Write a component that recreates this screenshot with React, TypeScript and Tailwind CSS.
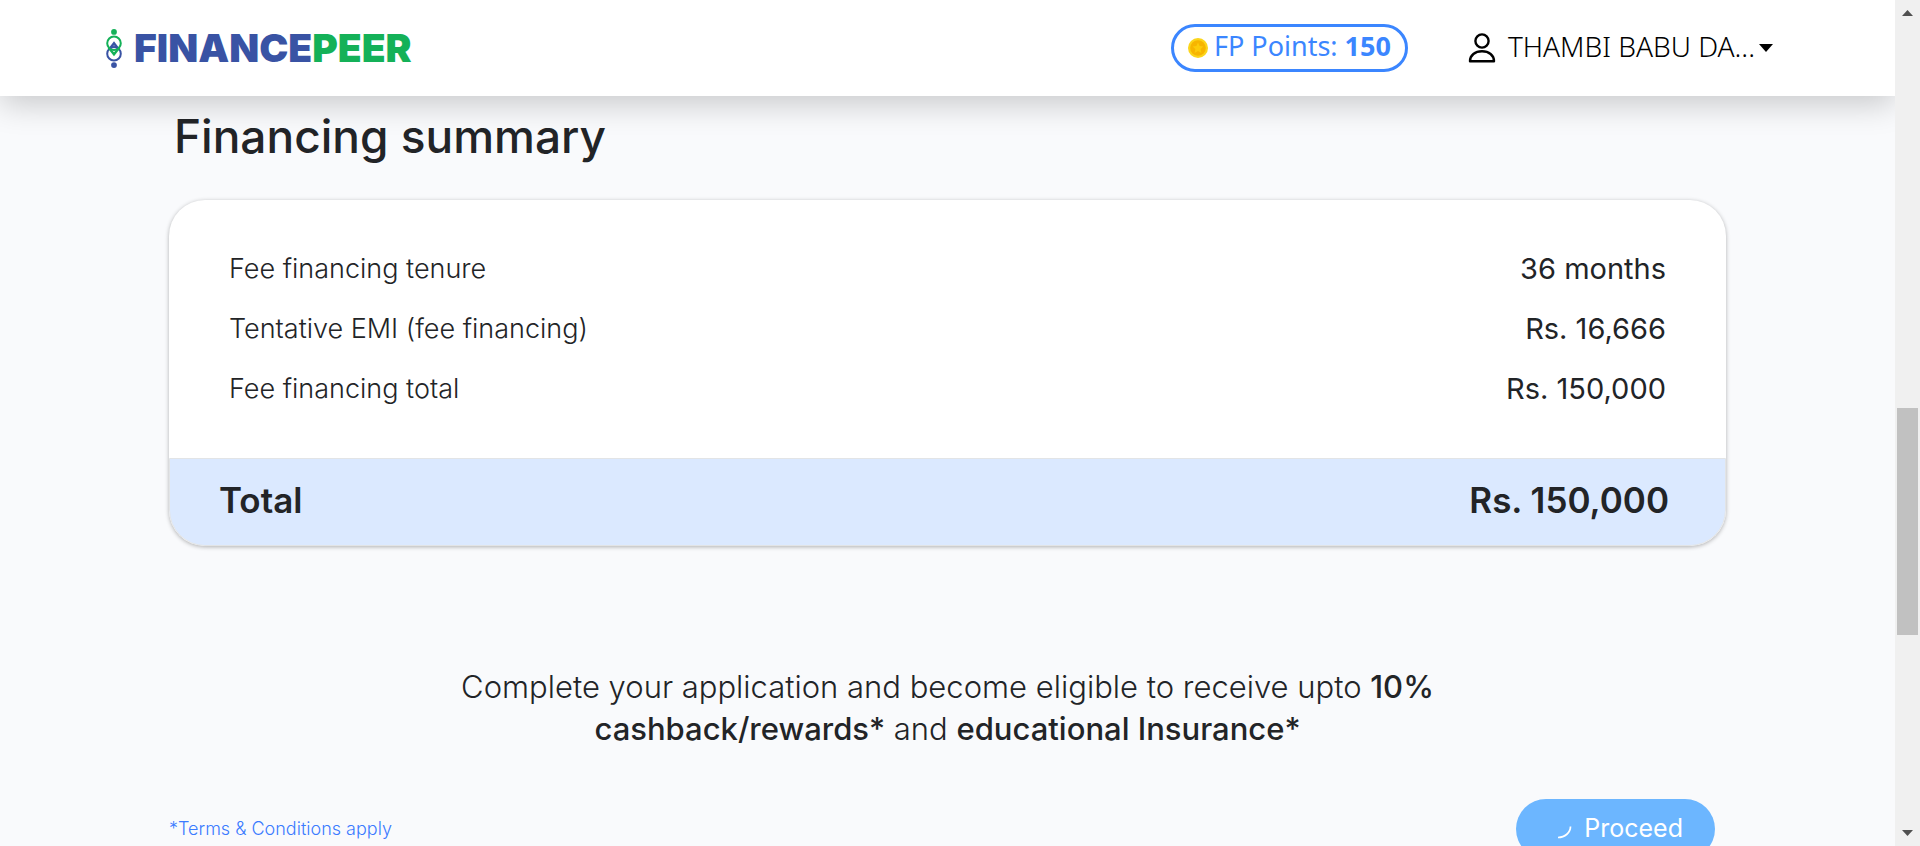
import React from "react";

const rows = [
  { label: "Fee financing tenure", value: "36 months" },
  { label: "Tentative EMI (fee financing)", value: "Rs. 16,666" },
  { label: "Fee financing total", value: "Rs. 150,000" },
];

function LogoMark() {
  return (
    <svg viewBox="0 0 16 39" className="h-[39px] w-4" fill="none" aria-hidden="true">
      <circle cx="8" cy="2.9" r="2.9" fill="#14b158" />
      <circle cx="8" cy="36.1" r="2.9" fill="#3953a4" />
      <circle cx="8" cy="24.7" r="6.8" stroke="#3953a4" strokeWidth="2" />
      <circle cx="8" cy="14.3" r="6.8" stroke="#14b158" strokeWidth="2" />
      <path d="M4 19.500 8 14.200l4 5.300" stroke="#3953a4" strokeWidth="2.400" />
      <path d="M2.600 18.400 8 25.200l5.400-6.800" stroke="#14b158" strokeWidth="2.400" />
    </svg>
  );
}

function Coin() {
  return (
    <svg viewBox="0 0 20 20" className="size-5" aria-hidden="true">
      <circle cx="10" cy="10" r="10" fill="#fbd51b" />
      <circle cx="10" cy="10" r="7.8" fill="#f7b500" />
      <path d="m10 4.6 1.6 3.5 3.8.4-2.8 2.6.8 3.8-3.4-1.9-3.4 1.9.8-3.8-2.8-2.6 3.8-.4z" fill="#fccb0a" />
    </svg>
  );
}

function UserIcon() {
  return (
    <svg viewBox="0 0 28 30" className="h-[30px] w-7" fill="none" stroke="#000" strokeWidth="2.400" aria-hidden="true">
      <circle cx="14" cy="8" r="6.600" />
      <path d="M2 28.300c0-6 5-10 12-10s12 4 12 10z" strokeLinejoin="round" />
    </svg>
  );
}

function Header() {
  return (
    <header className="relative z-10 flex h-24 shrink-0 items-center justify-between bg-white pr-[122px] pl-[106px] shadow-[0_8px_32px_rgba(0,0,0,0.2)]">
      <a href="#home" className="flex items-center gap-3">
        <LogoMark />
        <span className="font-[Inter,sans-serif] text-[39px] leading-10 font-black text-[#3953a4]">
          FINANCE<span className="text-[#14b158]">PEER</span>
        </span>
      </a>
      <div className="flex items-center gap-15 font-['Noto_Sans',sans-serif] leading-9">
        <button type="button" className="flex h-12 items-center gap-1.5 rounded-full border-3 border-[#3b86ff] px-[14px] text-[27px] text-[#3b86ff]">
          <Coin />
          <span className="pb-1">
            FP Points: <b className="font-bold">150</b>
          </span>
        </button>
        <button type="button" className="flex items-center text-[28px] text-black">
          <UserIcon />
          <span className="mr-1 ml-3 pb-1 font-light">THAMBI BABU DA...</span>
          <svg viewBox="0 0 14 8" className="h-2 w-[14px]" aria-hidden="true">
            <path d="M0 0h14L7 8z" />
          </svg>
        </button>
      </div>
    </header>
  );
}

function Summary() {
  return (
    <section>
      <h1 className="pl-[5px] text-[46px] leading-14 font-medium">Financing summary</h1>
      <div className="mt-9 overflow-hidden rounded-[36px] bg-white shadow-[0_1px_4px_rgba(0,0,0,0.3)]">
        <dl className="px-15 py-[39px]">
          {rows.map((row) => (
            <div key={row.label} className="flex h-15 items-center justify-between">
              <dt className="text-[27px] leading-9 font-light">{row.label}</dt>
              <dd className="text-[29px] leading-9">{row.value}</dd>
            </div>
          ))}
        </dl>
        <div className="flex h-[88px] items-center justify-between rounded-b-[36px] border border-[#e2e4e6] bg-[#dbe9ff] pr-14 pb-1 pl-[49px] text-[35px] leading-10 font-semibold">
          <span>Total</span>
          <span>Rs. 150,000</span>
        </div>
      </div>
    </section>
  );
}

function Scrollbar() {
  return (
    <div className="flex w-[25px] shrink-0 flex-col items-center bg-[#f0f0f0]" aria-hidden="true">
      <svg viewBox="0 0 11 6" className="mt-[10px] h-[6px] w-[11px]">
        <path d="M5.500 0 11 6H0z" fill="#505050" />
      </svg>
      <div className="flex w-full grow flex-col items-center">
        <div className="grow-[392]" />
        <div className="w-[21px] grow-[227] bg-[#c1c1c1]" />
        <div className="grow-[195]" />
      </div>
      <svg viewBox="0 0 11 6" className="mb-[10px] h-[6px] w-[11px]">
        <path d="M0 0h11L5.500 6z" fill="#505050" />
      </svg>
    </div>
  );
}

export default function App() {
  return (
    <div className="flex h-screen overflow-hidden bg-[#f9fafc]">
      <div className="flex min-w-0 grow flex-col overflow-hidden">
        <Header />
        <main className="px-[169px] pt-3 font-[Inter,sans-serif] text-[#222427]">
          <Summary />
          <p className="mx-auto mt-[120px] max-w-[1000px] text-center text-[31px] leading-[42px] font-light">
            Complete your application and become eligible to receive upto <b className="font-medium">10% cashback/rewards*</b> and{" "}
            <b className="font-medium">educational Insurance*</b>
          </p>
          <div className="mt-[49px] flex items-center justify-between pr-[11px]">
            <a href="#terms" className="text-[18px] leading-6 font-light text-[#3b7bff]">
              *Terms &amp; Conditions apply
            </a>
            <button type="button" className="flex h-15 items-center gap-3 rounded-full bg-[#6cb6ff] pr-8 pl-10 text-[25px] text-white">
              <svg viewBox="0 0 16 16" className="mt-2 size-4" fill="none" aria-hidden="true">
                <path d="M14.500 1.500c0 6-5.500 11-12.500 11" stroke="#fff" strokeWidth="1.700" />
              </svg>
              Proceed
            </button>
          </div>
        </main>
      </div>
      <Scrollbar />
    </div>
  );
}
